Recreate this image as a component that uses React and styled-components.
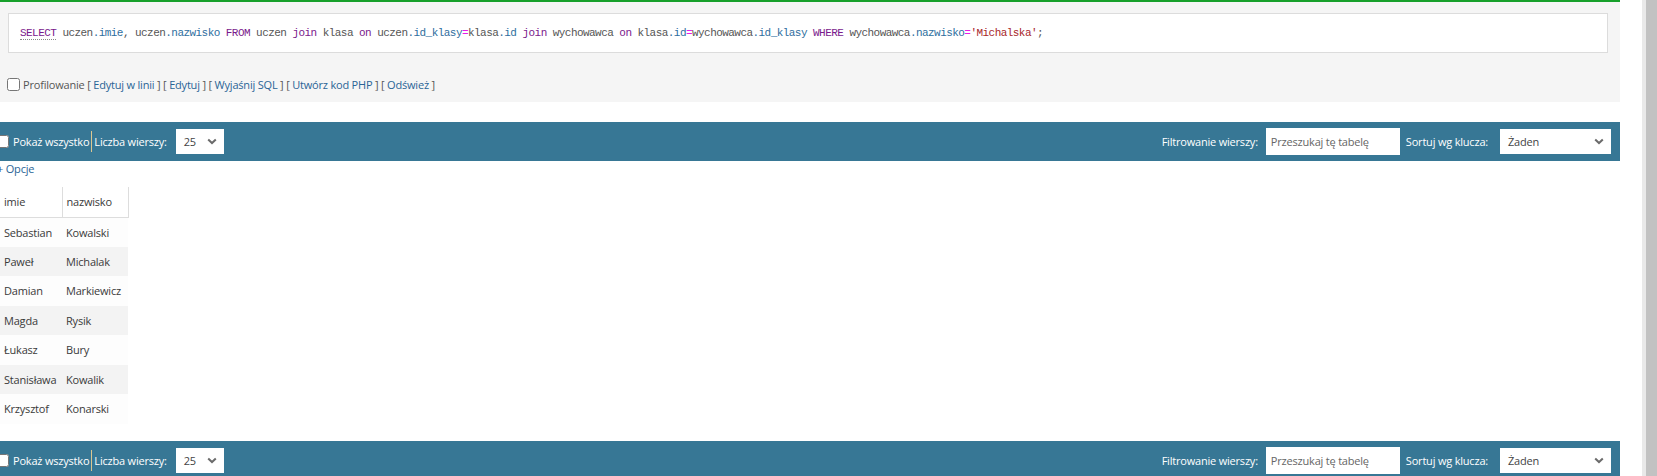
import styled, { createGlobalStyle } from "styled-components";

const GlobalStyle = createGlobalStyle`
  html, body {
    margin: 0;
    padding: 0;
    background: #fff;
    overflow: hidden;
  }
  body {
    font-family: "Open Sans", "Noto Sans", sans-serif;
    font-size: 11px;
    letter-spacing: -0.2px;
    color: #444;
  }
`;

const sqlTokens = [
  ["kw", "SELECT", true],
  ["txt", " "],
  ["id", "uczen"],
  ["col", ".imie"],
  ["txt", ", "],
  ["id", "uczen"],
  ["col", ".nazwisko"],
  ["txt", " "],
  ["kw", "FROM"],
  ["txt", " "],
  ["id", "uczen"],
  ["txt", " "],
  ["kw", "join"],
  ["txt", " "],
  ["id", "klasa"],
  ["txt", " "],
  ["kw", "on"],
  ["txt", " "],
  ["id", "uczen"],
  ["col", ".id_klasy"],
  ["op", "="],
  ["id", "klasa"],
  ["col", ".id"],
  ["txt", " "],
  ["kw", "join"],
  ["txt", " "],
  ["id", "wychowawca"],
  ["txt", " "],
  ["kw", "on"],
  ["txt", " "],
  ["id", "klasa"],
  ["col", ".id"],
  ["op", "="],
  ["id", "wychowawca"],
  ["col", ".id_klasy"],
  ["txt", " "],
  ["kw", "WHERE"],
  ["txt", " "],
  ["id", "wychowawca"],
  ["col", ".nazwisko"],
  ["op", "="],
  ["str", "'Michalska'"],
  ["id", ";"],
];

const tokenColors = {
  kw: "#7a1a8c",
  id: "#555",
  col: "#2e6e9e",
  op: "#e81ce8",
  str: "#a8262a",
  txt: "#555",
};

const links = ["Edytuj w linii", "Edytuj", "Wyjaśnij SQL", "Utwórz kod PHP", "Odśwież"];

const rows = [
  ["Sebastian", "Kowalski"],
  ["Paweł", "Michalak"],
  ["Damian", "Markiewicz"],
  ["Magda", "Rysik"],
  ["Łukasz", "Bury"],
  ["Stanisława", "Kowalik"],
  ["Krzysztof", "Konarski"],
];

const Chevron = () => (
  <svg width="10" height="7" viewBox="0 0 10 7">
    <path d="M1.2 1.4 L5 5 L8.8 1.4" fill="none" stroke="#6b6b6b" strokeWidth="2" />
  </svg>
);

const NavBar = ({ top }) => (
  <Navbar $top={top}>
    <NavGroup>
      <NavCheck type="checkbox" />
      <NavLabel $left={4}>Pokaż wszystko</NavLabel>
      <NavSeparator />
      <NavLabel>Liczba wierszy:</NavLabel>
      <SelectBox $w={48} $left={9}>
        <span>25</span>
        <Chevron />
      </SelectBox>
    </NavGroup>
    <NavGroup>
      <NavLabel>Filtrowanie wierszy:</NavLabel>
      <SearchInput placeholder="Przeszukaj tę tabelę" />
      <NavLabel $left={6}>Sortuj wg klucza:</NavLabel>
      <SelectBox $w={111} $left={12}>
        <span>Żaden</span>
        <Chevron />
      </SelectBox>
    </NavGroup>
  </Navbar>
);

export default function App() {
  return (
    <Page>
      <GlobalStyle />
      <Main>
        <ResultPanel>
          <SqlBox>
            <Code>
              {sqlTokens.map(([type, text, doc], i) => (
                <Token key={i} $color={tokenColors[type]} $doc={doc}>
                  {text}
                </Token>
              ))}
            </Code>
          </SqlBox>
          <ActionRow>
            <RowCheck type="checkbox" />
            <span>Profilowanie</span>
            {links.map((l) => (
              <span key={l}>
                {" [ "}
                <ActionLink href="#">{l}</ActionLink>
                {" ]"}
              </span>
            ))}
          </ActionRow>
        </ResultPanel>

        <NavBar top={20} />

        <OptionsLink href="#">+ Opcje</OptionsLink>

        <DataTable>
          <thead>
            <tr>
              <HeadCell $w={62}>imie</HeadCell>
              <HeadCell $w={66}>nazwisko</HeadCell>
            </tr>
          </thead>
          <tbody>
            {rows.map(([a, b], i) => (
              <Row key={a} $even={i % 2 === 1}>
                <Cell>{a}</Cell>
                <Cell>{b}</Cell>
              </Row>
            ))}
          </tbody>
        </DataTable>

        <NavBar top={17} />
      </Main>
      <Scrollbar>
        <Thumb />
      </Scrollbar>
    </Page>
  );
}

const Page = styled.div`
  display: flex;
  align-items: flex-start;
  height: 476px;
  overflow: hidden;
`;

const Main = styled.div`
  flex: 0 0 1620px;
  display: flex;
  flex-direction: column;
  align-items: flex-start;

  & > * {
    flex-shrink: 0;
  }
`;

const Scrollbar = styled.div`
  margin-left: auto;
  width: 15px;
  height: 476px;
  background: #e9e9e9;
  display: flex;
`;

const Thumb = styled.div`
  margin-left: 4px;
  flex: 1;
  background: #c2c2c2;
`;

const ResultPanel = styled.div`
  align-self: stretch;
  height: 102px;
  box-sizing: border-box;
  border-top: 2px solid #17a02b;
  background: #f5f5f5;
  padding-top: 11px;
`;

const SqlBox = styled.div`
  margin: 0 12px 0 8px;
  height: 40px;
  box-sizing: border-box;
  background: #fff;
  border: 1px solid #dcdcdc;
  display: flex;
  align-items: center;
  padding-left: 11px;
`;

const Code = styled.code`
  font-family: "Liberation Mono", "DejaVu Sans Mono", monospace;
  font-size: 11px;
  letter-spacing: -0.55px;
  white-space: pre;
`;

const Token = styled.span`
  color: ${(p) => p.$color};
  ${(p) => p.$doc && "border-bottom: 1px dotted #888;"}
`;

const ActionRow = styled.div`
  display: flex;
  align-items: center;
  margin-top: 23px;
  height: 16px;
  white-space: pre;
  color: #555;
`;

const RowCheck = styled.input`
  width: 13px;
  height: 13px;
  margin: 0 3px 0 7px;
`;

const ActionLink = styled.a`
  color: #2a6496;
  text-decoration: none;
`;

const Navbar = styled.div`
  align-self: stretch;
  margin-top: ${(p) => p.$top}px;
  height: 39px;
  background: #377795;
  color: #fff;
  display: flex;
  align-items: center;
  justify-content: space-between;
  padding-right: 9px;
`;

const NavGroup = styled.div`
  display: flex;
  align-items: center;
`;

const NavCheck = styled.input`
  width: 13px;
  height: 13px;
  margin: 0 0 0 -4px;
`;

const NavLabel = styled.span`
  margin-left: ${(p) => p.$left || 0}px;
  white-space: nowrap;
`;

const NavSeparator = styled.span`
  width: 1px;
  height: 21px;
  margin: 0 2px;
  background: #dcc791;
`;

const SelectBox = styled.div`
  width: ${(p) => p.$w}px;
  height: 25px;
  margin-left: ${(p) => p.$left}px;
  box-sizing: border-box;
  background: #fff;
  color: #444;
  display: flex;
  align-items: center;
  justify-content: space-between;
  padding: 0 7px 0 8px;
`;

const SearchInput = styled.input`
  width: 134px;
  height: 27px;
  margin-left: 8px;
  box-sizing: border-box;
  border: none;
  outline: none;
  padding: 0 5px;
  font-family: inherit;
  font-size: 11px;
  letter-spacing: inherit;
  &::placeholder {
    color: #666;
  }
`;

const OptionsLink = styled.a`
  margin-left: -3px;
  height: 16px;
  line-height: 16px;
  color: #2a6496;
  text-decoration: none;
`;

const DataTable = styled.table`
  margin-top: 10px;
  border-collapse: collapse;
  table-layout: fixed;
  color: #3a3a3a;
`;

const HeadCell = styled.th`
  width: ${(p) => p.$w}px;
  height: 30px;
  box-sizing: border-box;
  padding: 0 4px;
  text-align: left;
  font-weight: normal;
  background: #fff;
  border-right: 1px solid #ddd;
  border-bottom: 1px solid #ddd;
`;

const Row = styled.tr`
  background: ${(p) => (p.$even ? "#f3f3f3" : "#fdfdfd")};
`;

const Cell = styled.td`
  height: 29.5px;
  box-sizing: border-box;
  padding: 0 4px;
  white-space: nowrap;
`;
